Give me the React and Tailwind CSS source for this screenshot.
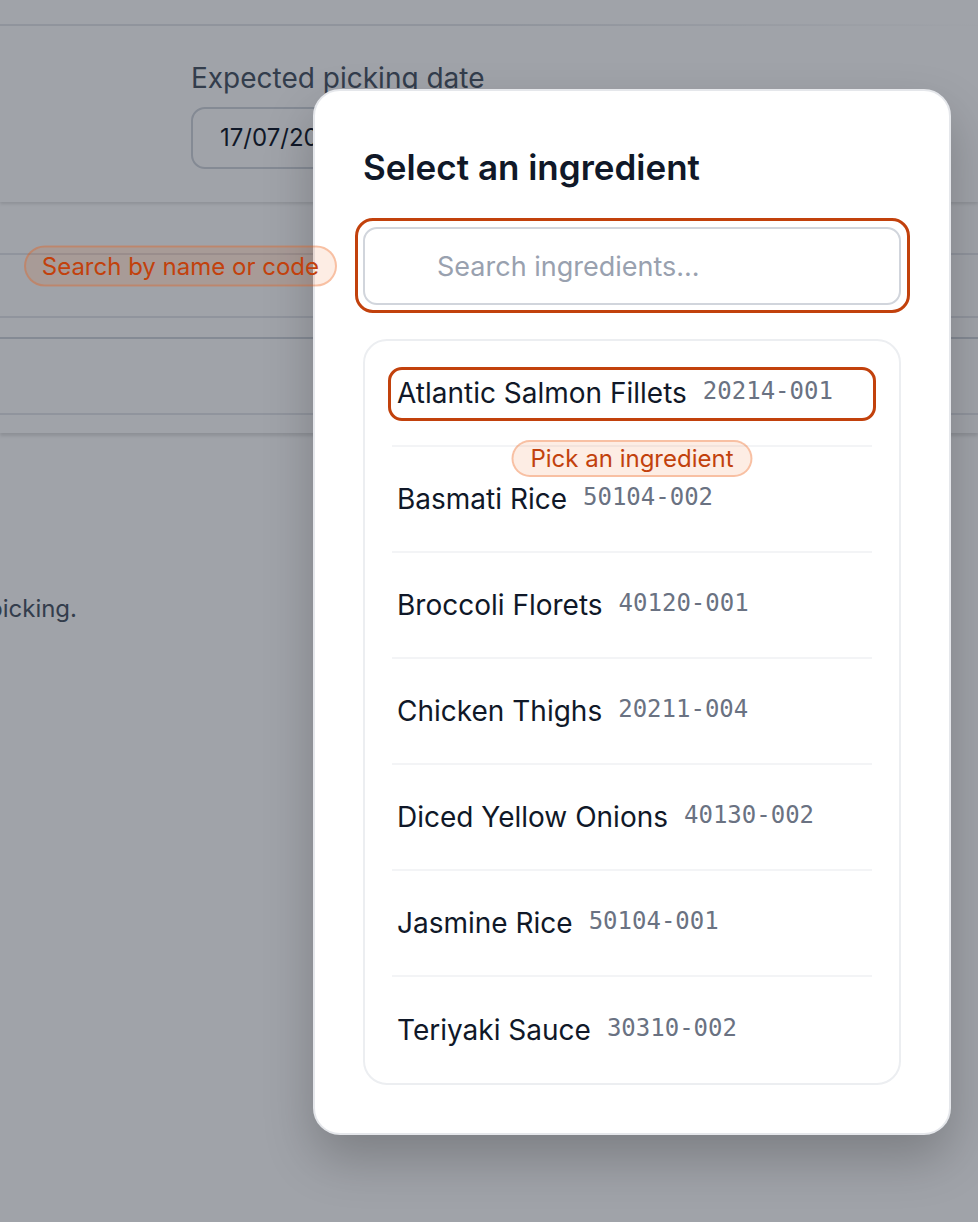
import React from "react";

const ingredients = [
  { name: "Atlantic Salmon Fillets", code: "20214-001" },
  { name: "Basmati Rice", code: "50104-002" },
  { name: "Broccoli Florets", code: "40120-001" },
  { name: "Chicken Thighs", code: "20211-004" },
  { name: "Diced Yellow Onions", code: "40130-002" },
  { name: "Jasmine Rice", code: "50104-001" },
  { name: "Teriyaki Sauce", code: "30310-002" },
];

const sans = "font-['Inter','Noto_Sans',sans-serif]";

// Callout bubble used for the onboarding hints
const Hint = ({ className, children }) => (
  <div
    className={`absolute flex items-center whitespace-nowrap rounded-full border-2 border-[rgba(234,88,12,0.3)] bg-[rgba(234,88,12,0.11)] text-[24px] text-[#c2410c] ${className}`}
  >
    {children}
  </div>
);

const PickingPage = () => (
  <div className="flex flex-col">
    <div className="h-[24px]" />
    <div className="h-[2px] bg-gradient-to-r from-[#e5e7eb] via-[#e5e7eb] via-50% to-transparent" />

    {/* Order details card */}
    <div className="h-[176px] bg-white pl-[191px] pt-[34px] shadow-[0_2px_3px_rgba(0,0,0,0.12)]">
      <label className="block text-[28px] leading-[36px] text-gray-600">
        Expected picking date
      </label>
      <div className="mt-[11px] flex h-[62px] w-[320px] items-center rounded-[14px] border-2 border-gray-300 pl-[27px] text-[24px] text-gray-900">
        17/07/2025
      </div>
    </div>

    <div className="h-[51px]" />
    <div className="h-[65px] border-y-2 border-gray-200" />
    <div className="h-[19px]" />
    <div className="h-[96px] border-t-2 border-gray-300 bg-white shadow-[0_3px_3px_rgba(0,0,0,0.12)]">
      <div className="h-[76px] border-b-2 border-gray-200" />
    </div>

    <div className="mt-[160px] flex w-[77px] justify-end">
      <p className="shrink-0 whitespace-nowrap text-[24px] leading-[32px] text-gray-600">
        No ingredients have been added for picking.
      </p>
    </div>
  </div>
);

const IngredientModal = () => (
  <div className="absolute left-[313px] top-[89px] w-[638px] rounded-[27px] border-2 border-gray-200 bg-white px-[48px] pb-[48px] pt-[56px] shadow-[0_24px_50px_rgba(0,0,0,0.22)]">
    <h2 className="text-[35px] font-semibold leading-[40px] text-gray-900">
      Select an ingredient
    </h2>

    <div className="relative mt-[40px]">
      <input
        type="text"
        placeholder="Search ingredients..."
        className="block h-[78px] w-full rounded-[14px] border-2 border-gray-300 bg-white pl-[72px] text-[27px] text-gray-900 placeholder:text-gray-400 focus:outline-none"
      />
      <div className="pointer-events-none absolute -bottom-[8px] -left-[8px] -right-[9px] -top-[9px] rounded-[18px] border-[3px] border-[#c2410c]" />
      <Hint className="right-[calc(100%+26px)] top-1/2 h-[41px] -translate-y-1/2 px-[16px]">
        Search by name or code
      </Hint>
    </div>

    <ul className="mt-[34px] rounded-[24px] border-2 border-[#eceef1] px-[27px]">
      {ingredients.map((item, i) => (
        <li
          key={item.code}
          className={`relative flex h-[106px] items-center gap-4 pl-[5px] ${
            i < ingredients.length - 1 ? "border-b-2 border-gray-100" : ""
          }`}
        >
          <span className="text-[28px] leading-[36px] text-gray-900">
            {item.name}
          </span>
          <span className="-mt-[5px] font-['DejaVu_Sans_Mono',monospace] text-[24px] leading-[32px] text-gray-500">
            {item.code}
          </span>
          {i === 0 && (
            <>
              <div className="pointer-events-none absolute -left-[4px] -right-[4px] top-[26px] h-[54px] rounded-[14px] border-[3px] border-[#c2410c]" />
              <Hint className="left-1/2 top-[99px] z-10 h-[37px] -translate-x-1/2 px-[17px]">
                Pick an ingredient
              </Hint>
            </>
          )}
        </li>
      ))}
    </ul>
  </div>
);

export default function App() {
  return (
    <div className={`relative h-[1222px] w-full overflow-hidden bg-white ${sans}`}>
      <PickingPage />
      <div className="absolute inset-0 bg-[rgba(17,24,39,0.4)]" />
      <IngredientModal />
    </div>
  );
}
